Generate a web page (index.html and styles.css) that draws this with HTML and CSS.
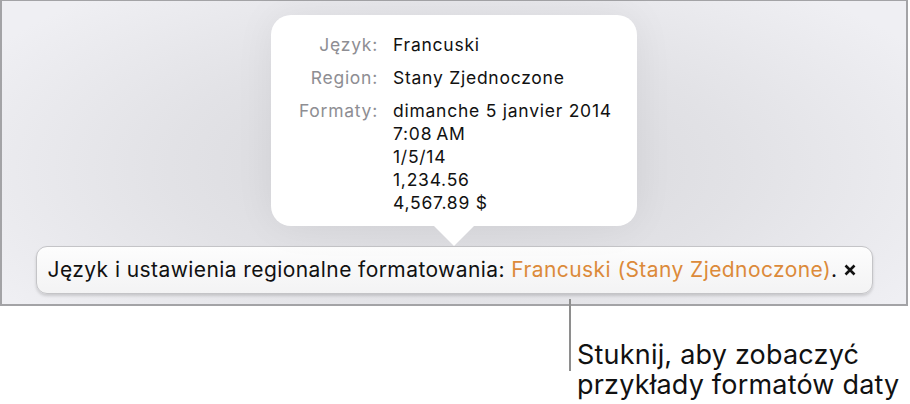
FILE: index.html
```html
<!DOCTYPE html>
<html lang="pl">
  <head>
    <meta charset="UTF-8" />
    <meta name="viewport" content="width=device-width, initial-scale=1.0" />
    <title>Język i region</title>
    <link rel="stylesheet" href="styles.css">
  </head>
  <body>
    <div class="screen">
      <div class="popover">
        <dl class="details">
          <dt>Język:</dt>
          <dd>Francuski</dd>
          <dt>Region:</dt>
          <dd>Stany Zjednoczone</dd>
          <dt>Formaty:</dt>
          <dd>
            dimanche 5 janvier 2014<br />
            7:08&#8201;AM<br />
            1/5/14<br />
            1,234.56<br />
            4,567.89 $
          </dd>
        </dl>
      </div>
      <div class="banner">
        <span class="banner-text"
          >Język i ustawienia regionalne formatowania:
          <span class="accent">Francuski (Stany Zjednoczone)</span>.</span
        >
        <button class="close" type="button" aria-label="Zamknij">
          <svg width="12" height="12" viewBox="0 0 12 12">
            <path d="M1.5 1.5 L10.5 10.5 M10.5 1.5 L1.5 10.5" />
          </svg>
        </button>
      </div>
    </div>
    <div class="callout">
      <div class="leader"></div>
      <p>Stuknij, aby zobaczyć<br />przykłady formatów daty</p>
    </div>
  </body>
</html>
```

FILE: styles.css
```css
body {
  margin: 0;
  background-color: #ffffff;
  font-family: Inter, "Liberation Sans", sans-serif;
  color: #111111;
}

.screen {
  width: 904px;
  border: 2px solid #a3a3a6;
  border-top-width: 1px;
  padding: 14px 0 10px;
  display: flex;
  flex-direction: column;
  align-items: center;
  background: radial-gradient(
    ellipse 70% 90% at 50% 55%,
    #d6d6da 0%,
    #e2e2e6 45%,
    #efeff3 85%
  );
}

.popover {
  position: relative;
  width: 366px;
  padding: 18px 0 12px;
  margin-bottom: 20px;
  background-color: #ffffff;
  border-radius: 20px;
  box-shadow: 0 0 40px rgba(0, 0, 0, 0.06);
}

/* arrow pointing down at the banner */
.popover::after {
  content: "";
  position: absolute;
  left: 163px;
  bottom: -20px;
  width: 40px;
  height: 20px;
  background-color: #ffffff;
  clip-path: polygon(0 0, 100% 0, 50% 100%);
}

.details {
  display: grid;
  grid-template-columns: 107px 1fr;
  column-gap: 15px;
  row-gap: 10px;
  margin: 0;
  font-size: 17.5px;
  line-height: 23px;
  letter-spacing: 0.75px;
}

.details dt {
  text-align: right;
  color: #8e8e93;
}

.details dd {
  margin: 0;
  color: #111111;
}

.banner {
  width: 808px;
  display: flex;
  align-items: center;
  justify-content: space-between;
  padding: 11px 16px 11px 11px;
  border: 1px solid #c4c4c7;
  border-radius: 11px;
  background: linear-gradient(#fdfdfd, #f3f3f4);
  box-shadow: 0 2px 3px rgba(0, 0, 0, 0.15);
  font-size: 21px;
  line-height: 24px;
  letter-spacing: 0.42px;
}

.accent {
  color: #dc8a3a;
}

.close {
  display: flex;
  padding: 0;
  border: none;
  background: none;
  cursor: pointer;
}

.close svg path {
  stroke: #111111;
  stroke-width: 2.6;
  fill: none;
}

.callout {
  display: flex;
  margin: -7px 0 0 569px;
}

.leader {
  width: 2px;
  height: 72px;
  background-color: #8e8e8e;
}

.callout p {
  margin: 41px 0 0;
  padding-left: 6px;
  font-size: 27px;
  line-height: 30px;
  letter-spacing: 0.2px;
  color: #111111;
}
```
